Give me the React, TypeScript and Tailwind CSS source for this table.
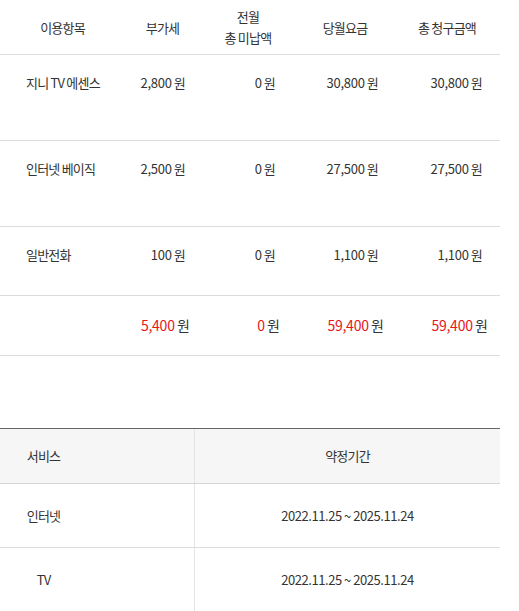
const font = { fontFamily: '"Noto Sans CJK KR", "Noto Sans", sans-serif' };

const cols = "grid grid-cols-[125px_75px_96px_98px_106px]";

const rows = [
  { name: "지니 TV 에센스", vat: "2,800", prev: "0", cur: "30,800", total: "30,800", h: "h-[86px]" },
  { name: "인터넷 베이직", vat: "2,500", prev: "0", cur: "27,500", total: "27,500", h: "h-[86px]" },
  { name: "일반전화", vat: "100", prev: "0", cur: "1,100", total: "1,100", h: "h-[69px]" },
];

const Won = ({ v, red }: { v: string; red?: boolean }) => (
  <span className="tracking-[-0.02em]">
    <span className={red ? "text-[#e8141c] text-[14px]" : ""}>{v}</span>
    <span className={red ? "text-[14px] tracking-[-0.06em]" : "tracking-[-0.06em]"}> 원</span>
  </span>
);

export default function App() {
  return (
    <div className="w-[519px] h-[611px] bg-white text-[#333] text-[13px] tracking-[-0.06em] overflow-hidden" style={font}>
      <div className="w-[500px]">
        <div className={`${cols} h-[55px] items-center text-center border-b border-[#dcdcdc] leading-[21px]`}>
          <div>이용항목</div>
          <div>부가세</div>
          <div>
            전월
            <br />총 미납액
          </div>
          <div>당월요금</div>
          <div>총 청구금액</div>
        </div>
        {rows.map((r) => (
          <div key={r.name} className={`${cols} ${r.h} pt-[18px] border-b border-[#dcdcdc] leading-[20px]`}>
            <div className="pl-[26px]">{r.name}</div>
            <div className="text-right pr-[15px]">
              <Won v={r.vat} />
            </div>
            <div className="text-right pr-[21px]">
              <Won v={r.prev} />
            </div>
            <div className="text-right pr-[16px]">
              <Won v={r.cur} />
            </div>
            <div className="text-right pr-[18px]">
              <Won v={r.total} />
            </div>
          </div>
        ))}
        <div className={`${cols} h-[60px] items-center border-b border-[#dcdcdc]`}>
          <div />
          <div className="text-right pr-[11px]">
            <Won v="5,400" red />
          </div>
          <div className="text-right pr-[17px]">
            <Won v="0" red />
          </div>
          <div className="text-right pr-[11px]">
            <Won v="59,400" red />
          </div>
          <div className="text-right pr-[13px]">
            <Won v="59,400" red />
          </div>
        </div>

        <div className="mt-[72px] border-t border-[#666]">
          <div className="grid grid-cols-[195px_305px] h-[55px] bg-[#f6f6f6] border-b border-[#d4d4d4]">
            <div className="flex items-center pl-[26px] border-r border-[#e4e4e4]">
              <span className="w-[35px] text-center">서비스</span>
            </div>
            <div className="flex items-center justify-center">약정기간</div>
          </div>
          {["인터넷", "TV"].map((s) => (
            <div key={s} className="grid grid-cols-[195px_305px] h-[64px] border-b border-[#dcdcdc]">
              <div className="flex items-center pl-[26px] border-r border-[#e4e4e4]">
                <span className="w-[35px] text-center">{s}</span>
              </div>
              <div className="flex items-center justify-center tracking-[-0.035em]">2022.11.25 ~ 2025.11.24</div>
            </div>
          ))}
        </div>
      </div>
    </div>
  );
}
